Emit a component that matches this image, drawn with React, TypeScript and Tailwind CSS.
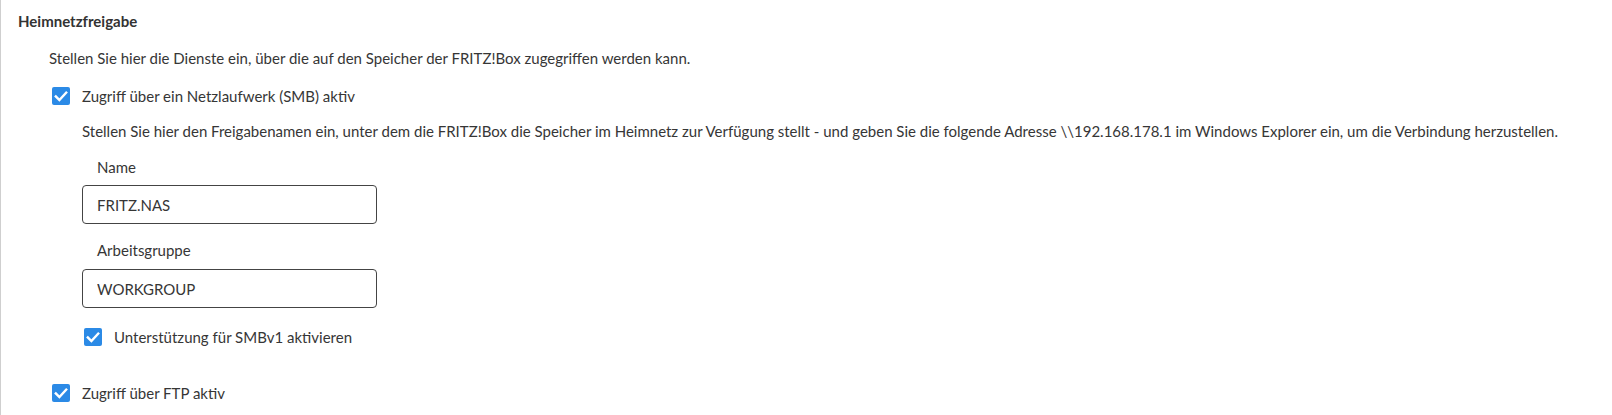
function Checkbox({ label }: { label: string }) {
  return (
    <label className="flex h-5 items-center gap-3">
      <span className="flex h-[18px] w-[18px] shrink-0 items-center justify-center rounded-[2px] bg-[#2b8ae6]">
        <svg viewBox="0 0 18 18" className="h-[18px] w-[18px]" fill="none">
          <path d="M3.8 9.4 7.4 13 14.2 5.6" stroke="white" strokeWidth={2.4} strokeLinecap="square" />
        </svg>
      </span>
      <span>{label}</span>
    </label>
  );
}

export default function App() {
  return (
    <div
      className="h-[415px] w-[1612px] bg-white text-[15px] leading-5 text-[#363636]"
      style={{ fontFamily: "Lato, 'Open Sans', sans-serif" }}
    >
      <div className="h-full border-l border-[#cfcfcf] pl-[17px] pt-[11px]">
        <h2 className="font-bold text-[#333]">Heimnetzfreigabe</h2>
        <p className="mt-[17px] pl-[31px]">
          Stellen Sie hier die Dienste ein, über die auf den Speicher der FRITZ!Box zugegriffen werden kann.
        </p>

        <div className="mt-[18px] pl-[34px]">
          <Checkbox label="Zugriff über ein Netzlaufwerk (SMB) aktiv" />
        </div>

        <div className="pl-[64px]">
          <p className="mt-[15px]">
            Stellen Sie hier den Freigabenamen ein, unter dem die FRITZ!Box die Speicher im Heimnetz zur Verfügung stellt - und geben Sie die folgende Adresse \\192.168.178.1 im Windows Explorer ein, um die Verbindung herzustellen.
          </p>

          <div className="mt-4 pl-[15px]">Name</div>
          <input
            readOnly
            value="FRITZ.NAS"
            className="mt-2 h-[39px] w-[295px] rounded-[4px] border border-[#444] px-[14px] text-[#363636] outline-none"
          />

          <div className="mt-4 pl-[15px]">Arbeitsgruppe</div>
          <input
            readOnly
            value="WORKGROUP"
            className="mt-[9px] h-[39px] w-[295px] rounded-[4px] border border-[#444] px-[14px] text-[#363636] outline-none"
          />

          <div className="mt-[19px] pl-[2px]">
            <Checkbox label="Unterstützung für SMBv1 aktivieren" />
          </div>
        </div>

        <div className="mt-9 pl-[34px]">
          <Checkbox label="Zugriff über FTP aktiv" />
        </div>
      </div>
    </div>
  );
}
